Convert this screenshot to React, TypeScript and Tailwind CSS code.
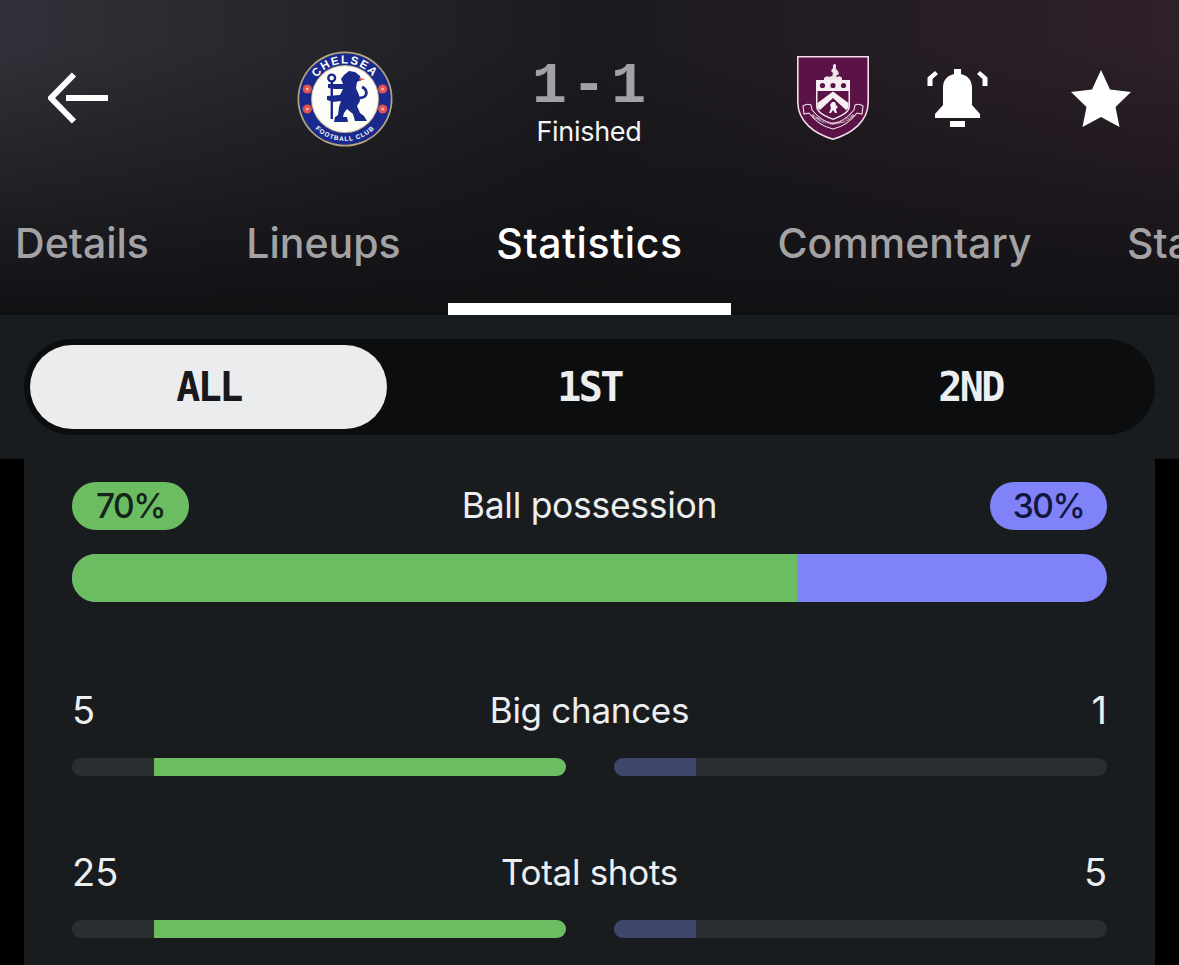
const font = "font-['Inter','Noto_Sans',sans-serif]";

function ChelseaCrest() {
  return (
    <svg viewBox="0 0 96 96" className="w-[96px] h-[96px] shrink-0 mt-[1px]">
      <defs>
        <path id="topArc" d="M12.500 48 A35.500 35.500 0 0 1 83.500 48" />
        <path id="botArc" d="M6 48 A42 42 0 0 0 90 48" />
      </defs>
      <circle cx="48" cy="48" r="47.5" fill="#b8a57e" />
      <circle cx="48" cy="48" r="45.8" fill="#1a2a8c" />
      <circle cx="48" cy="48" r="34" fill="#c4b795" />
      <circle cx="48" cy="48" r="33" fill="#fdfdf8" />
      <text fontFamily="'Liberation Sans',sans-serif" fontWeight="700" fontSize="11.5" letterSpacing="1.6" fill="#fff">
        <textPath href="#topArc" startOffset="50%" textAnchor="middle">CHELSEA</textPath>
      </text>
      <text fontFamily="'Liberation Sans',sans-serif" fontWeight="700" fontSize="6.4" letterSpacing="0.9" fill="#fff">
        <textPath href="#botArc" startOffset="50%" textAnchor="middle">FOOTBALL CLUB</textPath>
      </text>
      {[[10.3, 38], [85.7, 38], [10.3, 58], [85.7, 58]].map(([x, y]) => (
        <g key={`${x}-${y}`}>
          <circle cx={x} cy={y} r="4.6" fill="#e3504f" />
          <circle cx={x} cy={y} r="1.6" fill="#f6b3a6" />
        </g>
      ))}
      <circle cx="34.700" cy="27" r="3.400" fill="none" stroke="#1a2a8c" strokeWidth="2.400" />
      <rect x="33.600" y="31" width="2.400" height="37" fill="#1a2a8c" />
      <path
        fill="#1a2a8c"
        d="M47 24 L52 20 L58 21 L63 25 L64 29 L60 31 L59 37 L62 44 L63 50 L60 55 L63 62 L67 65 L70 70 L58 70 L56 63 L50 58 L47 62 L46 66 L50 66 L51 71 L37 71 L38 66 L41 64 L42 56 L44 50 L36 51 L30 49 L30 45 L43 44 L46 38 L38 38 L31 37 L31 33 L46 33 L44 28 Z"
      />
      <path d="M61 47 C72 47 71 39 65 36" fill="none" stroke="#1a2a8c" strokeWidth="2.800" />
      <path d="M62 27 L68 28 L63 30 Z" fill="#e3504f" />
    </svg>
  );
}

function BurnleyCrest() {
  return (
    <svg viewBox="0 0 72 84" className="w-[72px] h-[84px] shrink-0">
      <defs>
        <path id="scrollArc" d="M9 55 Q36 82 63 55" />
      </defs>
      <path d="M0.800 0.800 H71.200 V46 C71.200 66 54 78 36 83.200 C18 78 0.800 66 0.800 46 Z" fill="#5b1347" stroke="#f3dde9" strokeWidth="1.600" />
      <path d="M36 9 q2 -2 3 0 l0 4 q3 2 3 5 l-2 1 l-1 2 l-4 0 l1 -4 l-2 -2 q1 -2 2 -3 z" fill="#efe3ea" />
      <path d="M27 22 q3 -3 5 -1 q4 -2 8 0 q3 -2 5 1 l0 2 l-18 0 z" fill="#f1e6ec" />
      <path d="M19 24 H53 V50 C53 57 44 61 36 64 C28 61 19 57 19 50 Z" fill="#f6eef2" />
      <circle cx="25.500" cy="29.500" r="2.600" fill="#5b1347" />
      <circle cx="36" cy="29.500" r="2.600" fill="#5b1347" />
      <circle cx="46.500" cy="29.500" r="2.600" fill="#5b1347" />
      <path d="M20.500 35 H51.500 V50 C51.500 56 43 60 36 62.500 C29 60 20.500 56 20.500 50 Z" fill="#5b1347" />
      <path d="M20.500 47 L36 35.500 L51.500 47 L51.500 52 L49 54 L36 42 L23 54 L20.500 52 Z" fill="#f6eef2" />
      <path d="M35 46 l3 0 l1 3 l2 2 l-2 2 l1 4 l-2 0 l-2 -3 l-2 3 l-2 0 l2 -5 l-1 -3 z" fill="#f6eef2" />
      <path d="M6 50 q4 -3 8 -1 l1 5 q9 11 21 14 q12 -3 21 -14 l1 -5 q4 -2 8 1 l-1 8 l-5 -1 q-10 13 -24 16 q-14 -3 -24 -16 l-5 1 z" fill="#5b1347" stroke="#f0e2ea" strokeWidth="1.100" />
      <text fontFamily="'Liberation Sans',sans-serif" fontWeight="700" fontSize="3.500" fill="#f3e7ed">
        <textPath href="#scrollArc" startOffset="50%" textAnchor="middle">BURNLEY FOOTBALL CLUB</textPath>
      </text>
    </svg>
  );
}

function BackArrow() {
  return (
    <svg viewBox="0 0 60 54" className="w-[60px] h-[54px] shrink-0 mt-[1px]" fill="none" stroke="#fff" strokeWidth="6">
      <path d="M26 2.500 L3 26 L26 49.500" />
      <path d="M18 26 H60" />
    </svg>
  );
}

function Bell() {
  return (
    <svg viewBox="0 0 61 60" className="w-[61px] h-[60px] shrink-0" fill="#fff">
      <path d="M27 1 H34 V6 C42 8 45 13 45 20 V37 L53 46 V50 H8 V46 L16 37 V20 C16 13 19 8 27 6 Z" />
      <rect x="23" y="53" width="15" height="6" />
      <path d="M8 3 L11 6 L5.500 11 V18 H0.500 V9.500 Z" />
      <path d="M53 3 L50 6 L55.500 11 V18 H60.500 V9.500 Z" />
    </svg>
  );
}

function Star() {
  return (
    <svg viewBox="0 0 60 57" className="w-[60px] h-[57px] shrink-0" fill="#fff">
      <path d="M30 0 L39 19.500 L60 22 L44.500 37 L48.500 57 L30 47 L11.500 57 L15.500 37 L0 22 L21 19.500 Z" />
    </svg>
  );
}

function SplitRow({ label, left, right }: { label: string; left: string; right: string }) {
  return (
    <div className="flex flex-col">
      <div className="h-[48px] grid grid-cols-[1fr_auto_1fr] items-center text-[#eceef0]">
        <span className="text-[38px]">{left}</span>
        <span className="text-[35px] tracking-[-0.3px]">{label}</span>
        <span className="text-[38px] text-right">{right}</span>
      </div>
      <div className="mt-[28px] flex gap-[48px]">
        <div className="flex-1 h-[18px] rounded-full bg-[#2b2e31] overflow-hidden flex justify-end">
          <div className="w-[412px] bg-[#6cbd61]" />
        </div>
        <div className="flex-1 h-[18px] rounded-full bg-[#2b2e31] overflow-hidden">
          <div className="w-[82px] h-full bg-[#40456b]" />
        </div>
      </div>
    </div>
  );
}

export default function App() {
  return (
    <div className={`w-[1179px] h-[965px] overflow-hidden bg-black ${font}`}>
      <header className="h-[315px] flex flex-col justify-between overflow-hidden bg-[linear-gradient(to_bottom,rgba(14,14,16,0)_15%,#111114_100%),linear-gradient(to_right,#313239_0%,#1b1a1f_50%,#2f2029_100%)]">
        <div className="flex items-center pt-[50px] h-[146px]">
          <div className="ml-[48px]"><BackArrow /></div>
          <div className="ml-[189px]"><ChelseaCrest /></div>
          <div className="ml-[76px] w-[240px] flex flex-col items-center mt-[12px]">
            <span className="font-['Liberation_Mono',monospace] font-bold text-[58px] leading-[54px] text-[#a2a2a4] [word-spacing:-30px]">1 - 1</span>
            <span className="text-[27px] leading-[32px] text-[#f4f4f4] tracking-[-0.3px] mt-[2px]">Finished</span>
          </div>
          <div className="ml-[88px]"><BurnleyCrest /></div>
          <div className="ml-[58px]"><Bell /></div>
          <div className="ml-[83px]"><Star /></div>
        </div>
        <nav className="flex -ml-[35px] w-[1400px] text-[41px] leading-[50px] font-medium whitespace-nowrap">
          <div className="w-[234px] h-[100px] pt-[3px] border-b-[12px] border-transparent text-[#a3a3a5] text-center">Details</div>
          <div className="w-[249px] h-[100px] pt-[3px] border-b-[12px] border-transparent text-[#a3a3a5] text-center">Lineups</div>
          <div className="w-[283px] h-[100px] pt-[3px] border-b-[12px] border-white text-white text-center tracking-[0.6px]">Statistics</div>
          <div className="w-[347px] h-[100px] pt-[3px] border-b-[12px] border-transparent text-[#a3a3a5] text-center">Commentary</div>
          <div className="h-[100px] pl-[49px] pt-[3px] border-b-[12px] border-transparent text-[#a3a3a5]">Standings</div>
        </nav>
      </header>

      <section className="h-[144px] bg-[#191c1f] border-b border-[#14161a] px-[24px] pt-[24px]">
        <div className="h-[96px] rounded-full bg-[#0c0d0f] p-[6px] flex font-['DejaVu_Sans_Mono',monospace] font-bold text-[40px] tracking-[-2.500px]">
          <div className="w-[357px] rounded-full bg-[#ebecee] text-[#17191c] flex items-center justify-center">ALL</div>
          <div className="w-[405px] text-[#eceef0] flex items-center justify-center">1ST</div>
          <div className="flex-1 text-[#eceef0] flex items-center justify-center">2ND</div>
        </div>
      </section>

      <main className="mx-[24px] h-[506px] bg-[#191c1f] px-[48px] pt-[23px]">
        <div className="flex items-center justify-between h-[48px] text-[#eceef0]">
          <span className="w-[117px] h-[48px] rounded-full bg-[#6cbd61] text-[#13251a] text-[33.500px] font-medium tracking-[-1.500px] flex items-center justify-center">70%</span>
          <span className="text-[35.500px] tracking-[-0.3px]">Ball possession</span>
          <span className="w-[117px] h-[48px] rounded-full bg-[#7f83f7] text-[#12163f] text-[33.500px] font-medium tracking-[-1.500px] flex items-center justify-center">30%</span>
        </div>
        <div className="mt-[24px] h-[48px] rounded-full overflow-hidden flex bg-[#7f83f7]">
          <div className="w-[725px] bg-[#6cbd61]" />
        </div>
        <div className="mt-[80px]">
          <SplitRow label="Big chances" left="5" right="1" />
        </div>
        <div className="mt-[68px]">
          <SplitRow label="Total shots" left="25" right="5" />
        </div>
      </main>
    </div>
  );
}
